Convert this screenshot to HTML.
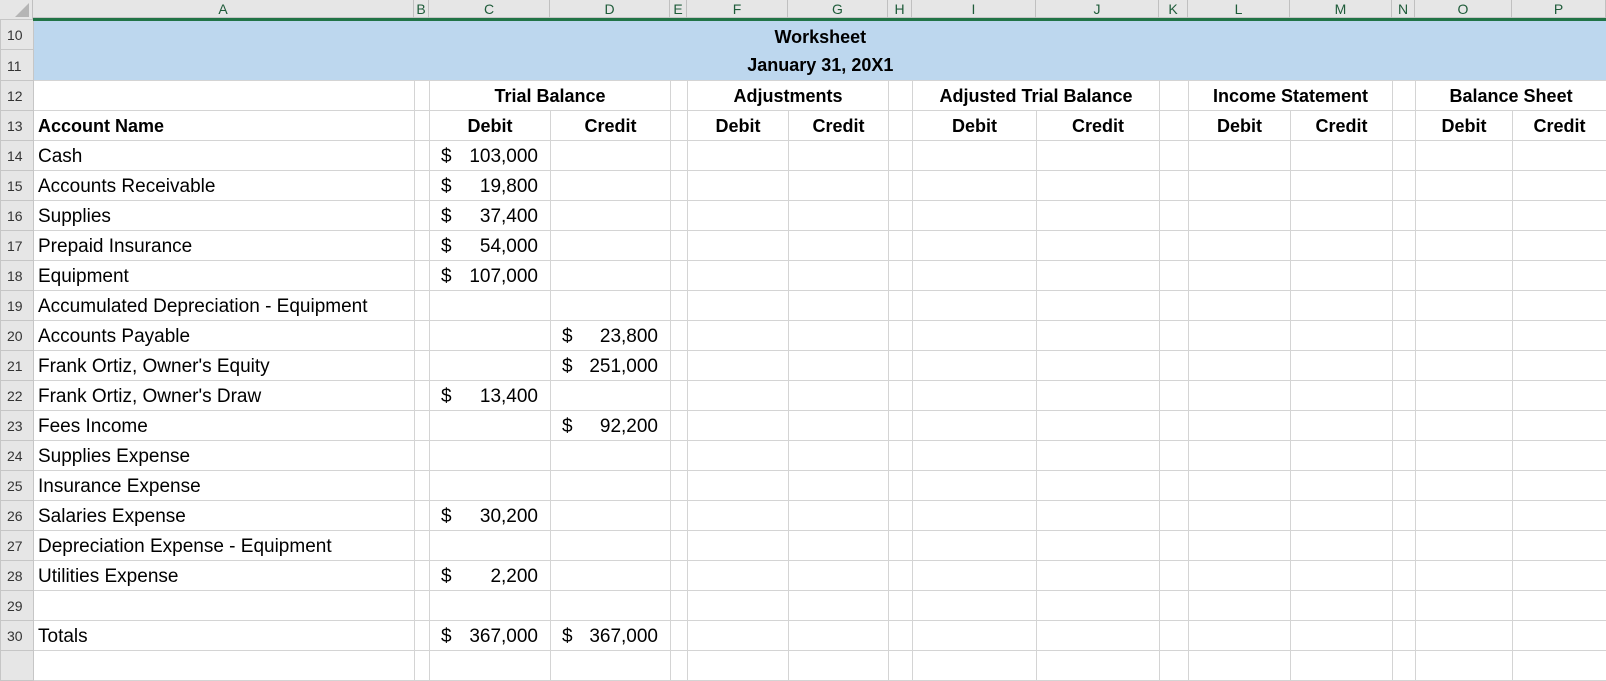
<!DOCTYPE html>
<html><head><meta charset="utf-8"><style>
*{margin:0;padding:0;box-sizing:border-box}
body{width:1606px;height:656px;overflow:hidden;background:#fff;font-family:"Liberation Sans",Arial,sans-serif;position:relative}
.hdr{position:absolute;left:0;top:0;width:1606px;height:18px;background:#e6e6e6;border-bottom:1px solid #c6c6c6}
.hdr div{position:absolute;top:0;height:18px;border-right:1px solid #c0c0c0;text-align:center;font-size:14px;line-height:18px;color:#1f5c3a}
.green{position:absolute;left:33px;top:18px;width:1573px;height:3px;background:#217346;z-index:2}
.corner{position:absolute;left:0;top:0;width:33px;height:21px;background:#e6e6e6;border-right:1px solid #c0c0c0}
.corner:after{content:"";position:absolute;right:3px;bottom:4px;border-left:14px solid transparent;border-bottom:14px solid #b5b5b5}
table{position:absolute;left:0;top:19px;border-collapse:collapse;table-layout:fixed;width:1606px}
td{border:1px solid #d4d4d4;height:30px;padding:0 4px;font-size:19px;line-height:20px;vertical-align:bottom;padding-bottom:3px;white-space:nowrap;overflow:hidden;color:#000}
td.rh{background:#e6e6e6;border-color:#c6c6c6;font-size:14px;color:#333;padding:0 0 4px 6px}
.band td.b{background:#bdd7ee;border:none;padding:0}
.band .inner{height:60px;overflow:hidden;padding-top:3px;line-height:28px;font-size:18px;font-weight:bold;text-align:center}
b{font-weight:bold;font-size:18px}
.c{text-align:center}
.m span{float:left;padding-left:7px}
.m{text-align:right;padding-right:12px}
</style></head><body>
<div class="hdr">
<div style="left:33px;width:381px">A</div>
<div style="left:414px;width:15px">B</div>
<div style="left:429px;width:121px">C</div>
<div style="left:550px;width:120px">D</div>
<div style="left:670px;width:17px">E</div>
<div style="left:687px;width:101px">F</div>
<div style="left:788px;width:100px">G</div>
<div style="left:888px;width:24px">H</div>
<div style="left:912px;width:124px">I</div>
<div style="left:1036px;width:123px">J</div>
<div style="left:1159px;width:29px">K</div>
<div style="left:1188px;width:102px">L</div>
<div style="left:1290px;width:102px">M</div>
<div style="left:1392px;width:23px">N</div>
<div style="left:1415px;width:97px">O</div>
<div style="left:1512px;width:94px">P</div>
</div>
<div class="corner"></div>
<div class="green"></div>
<table>
<colgroup><col style="width:33px"><col style="width:381px"><col style="width:15px"><col style="width:121px"><col style="width:120px"><col style="width:17px"><col style="width:101px"><col style="width:100px"><col style="width:24px"><col style="width:124px"><col style="width:123px"><col style="width:29px"><col style="width:102px"><col style="width:102px"><col style="width:23px"><col style="width:97px"><col style="width:94px"></colgroup>
<tr class="band"><td class="rh">10</td><td class="b" colspan="16" rowspan="2"><div class="inner">Worksheet<br>January 31, 20X1</div></td></tr>
<tr class="band"><td class="rh">11</td></tr>
<tr><td class="rh">12</td><td></td><td></td><td class="c" colspan="2"><b>Trial Balance</b></td><td></td><td class="c" colspan="2"><b>Adjustments</b></td><td></td><td class="c" colspan="2"><b>Adjusted Trial Balance</b></td><td></td><td class="c" colspan="2"><b>Income Statement</b></td><td></td><td class="c" colspan="2"><b>Balance Sheet</b></td></tr>
<tr><td class="rh">13</td><td><b>Account Name</b></td><td></td><td class="c"><b>Debit</b></td><td class="c"><b>Credit</b></td><td></td><td class="c"><b>Debit</b></td><td class="c"><b>Credit</b></td><td></td><td class="c"><b>Debit</b></td><td class="c"><b>Credit</b></td><td></td><td class="c"><b>Debit</b></td><td class="c"><b>Credit</b></td><td></td><td class="c"><b>Debit</b></td><td class="c"><b>Credit</b></td></tr>
<tr><td class="rh">14</td><td>Cash</td><td></td><td class="m"><span>$</span>103,000</td><td></td><td></td><td></td><td></td><td></td><td></td><td></td><td></td><td></td><td></td><td></td><td></td><td></td></tr>
<tr><td class="rh">15</td><td>Accounts Receivable</td><td></td><td class="m"><span>$</span>19,800</td><td></td><td></td><td></td><td></td><td></td><td></td><td></td><td></td><td></td><td></td><td></td><td></td><td></td></tr>
<tr><td class="rh">16</td><td>Supplies</td><td></td><td class="m"><span>$</span>37,400</td><td></td><td></td><td></td><td></td><td></td><td></td><td></td><td></td><td></td><td></td><td></td><td></td><td></td></tr>
<tr><td class="rh">17</td><td>Prepaid Insurance</td><td></td><td class="m"><span>$</span>54,000</td><td></td><td></td><td></td><td></td><td></td><td></td><td></td><td></td><td></td><td></td><td></td><td></td><td></td></tr>
<tr><td class="rh">18</td><td>Equipment</td><td></td><td class="m"><span>$</span>107,000</td><td></td><td></td><td></td><td></td><td></td><td></td><td></td><td></td><td></td><td></td><td></td><td></td><td></td></tr>
<tr><td class="rh">19</td><td>Accumulated Depreciation - Equipment</td><td></td><td></td><td></td><td></td><td></td><td></td><td></td><td></td><td></td><td></td><td></td><td></td><td></td><td></td><td></td></tr>
<tr><td class="rh">20</td><td>Accounts Payable</td><td></td><td></td><td class="m"><span>$</span>23,800</td><td></td><td></td><td></td><td></td><td></td><td></td><td></td><td></td><td></td><td></td><td></td><td></td></tr>
<tr><td class="rh">21</td><td>Frank Ortiz, Owner's Equity</td><td></td><td></td><td class="m"><span>$</span>251,000</td><td></td><td></td><td></td><td></td><td></td><td></td><td></td><td></td><td></td><td></td><td></td><td></td></tr>
<tr><td class="rh">22</td><td>Frank Ortiz, Owner's Draw</td><td></td><td class="m"><span>$</span>13,400</td><td></td><td></td><td></td><td></td><td></td><td></td><td></td><td></td><td></td><td></td><td></td><td></td><td></td></tr>
<tr><td class="rh">23</td><td>Fees Income</td><td></td><td></td><td class="m"><span>$</span>92,200</td><td></td><td></td><td></td><td></td><td></td><td></td><td></td><td></td><td></td><td></td><td></td><td></td></tr>
<tr><td class="rh">24</td><td>Supplies Expense</td><td></td><td></td><td></td><td></td><td></td><td></td><td></td><td></td><td></td><td></td><td></td><td></td><td></td><td></td><td></td></tr>
<tr><td class="rh">25</td><td>Insurance Expense</td><td></td><td></td><td></td><td></td><td></td><td></td><td></td><td></td><td></td><td></td><td></td><td></td><td></td><td></td><td></td></tr>
<tr><td class="rh">26</td><td>Salaries Expense</td><td></td><td class="m"><span>$</span>30,200</td><td></td><td></td><td></td><td></td><td></td><td></td><td></td><td></td><td></td><td></td><td></td><td></td><td></td></tr>
<tr><td class="rh">27</td><td>Depreciation Expense - Equipment</td><td></td><td></td><td></td><td></td><td></td><td></td><td></td><td></td><td></td><td></td><td></td><td></td><td></td><td></td><td></td></tr>
<tr><td class="rh">28</td><td>Utilities Expense</td><td></td><td class="m"><span>$</span>2,200</td><td></td><td></td><td></td><td></td><td></td><td></td><td></td><td></td><td></td><td></td><td></td><td></td><td></td></tr>
<tr><td class="rh">29</td><td></td><td></td><td></td><td></td><td></td><td></td><td></td><td></td><td></td><td></td><td></td><td></td><td></td><td></td><td></td><td></td></tr>
<tr><td class="rh">30</td><td>Totals</td><td></td><td class="m"><span>$</span>367,000</td><td class="m"><span>$</span>367,000</td><td></td><td></td><td></td><td></td><td></td><td></td><td></td><td></td><td></td><td></td><td></td><td></td></tr>
<tr><td class="rh"></td><td></td><td></td><td></td><td></td><td></td><td></td><td></td><td></td><td></td><td></td><td></td><td></td><td></td><td></td><td></td><td></td></tr>
</table>
</body></html>
